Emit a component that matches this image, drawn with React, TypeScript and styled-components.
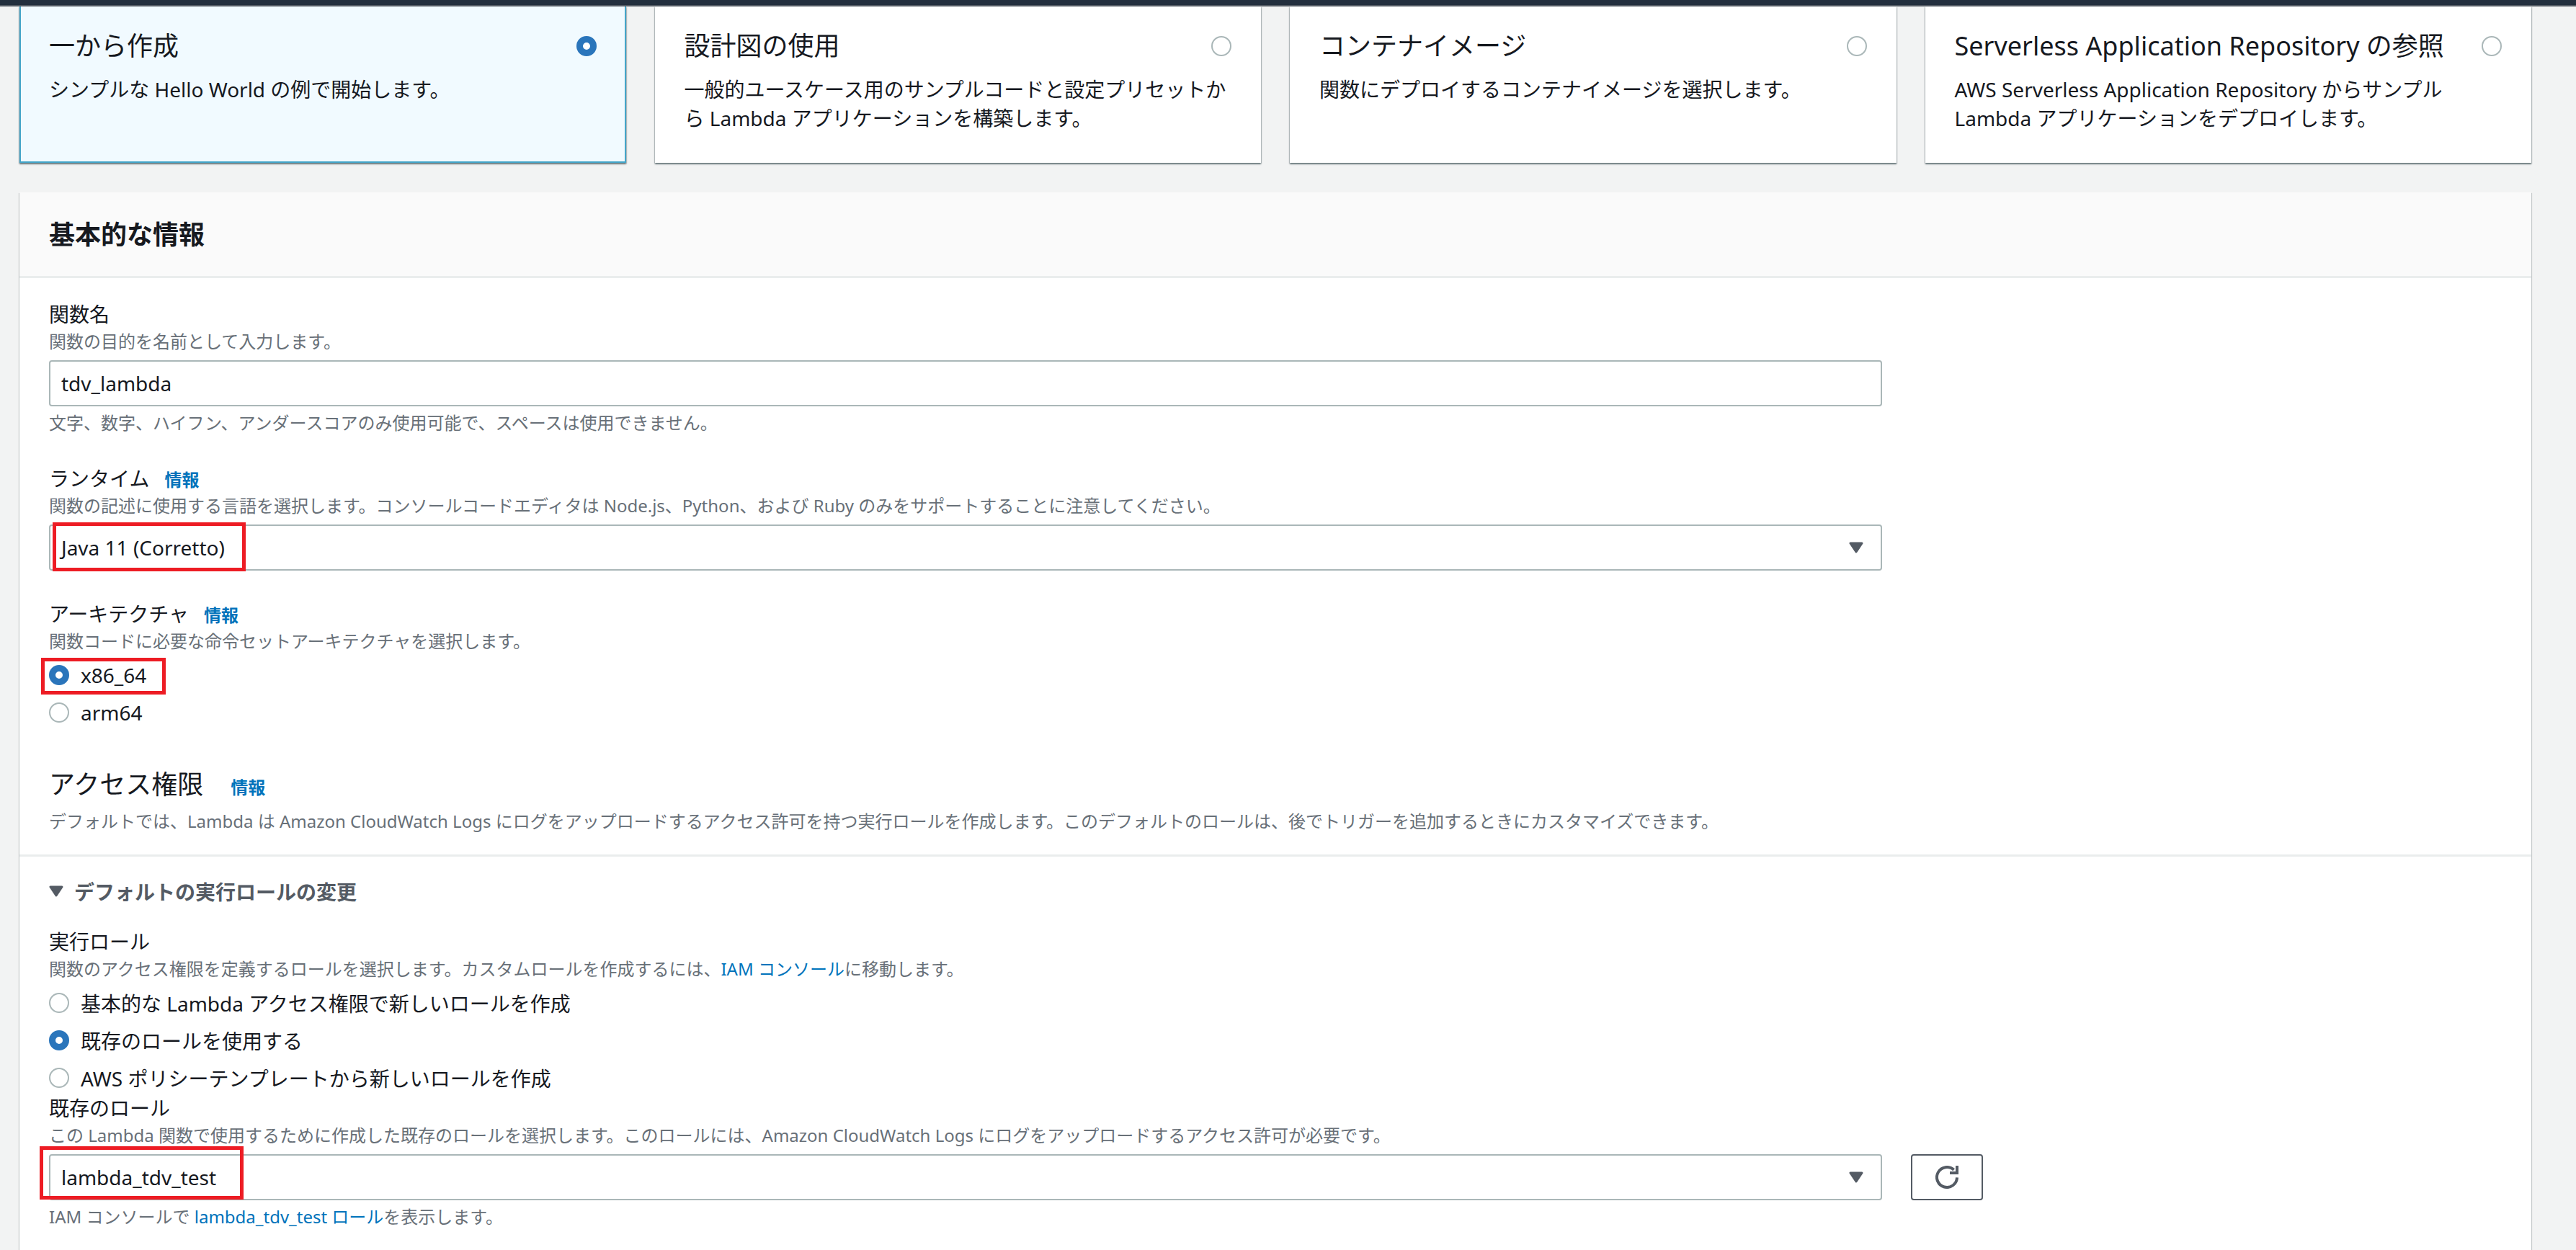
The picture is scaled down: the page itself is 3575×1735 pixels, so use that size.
import React, { FC } from 'react';
import styled, { createGlobalStyle } from 'styled-components';

const GlobalStyle = createGlobalStyle`
    html, body {
        margin: 0;
        padding: 0;
        background: #f2f3f3;
    }

    body {
        font-family: 'Noto Sans', 'Noto Sans CJK JP', sans-serif;
        color: #16191f;
    }
`;

const Page = styled.div`
    width: 3575px;
    height: 1735px;
    overflow: hidden;
    box-sizing: border-box;
    border-top: 7px solid #232f3e;
`;

const TopEdge = styled.div`
    height: 2px;
    background: #545b64;
`;

const Content = styled.div`
    padding: 0 62px 0 27px;
`;

const CardGrid = styled.div`
    display: grid;
    grid-template-columns: repeat(4, 1fr);
    gap: 40px;
`;

const Card = styled.div<{ $selected?: boolean }>`
    height: 217px;
    box-sizing: border-box;
    padding: ${({ $selected }) => ($selected ? '33px 39px 0' : '33px 41px 0')};
    background: ${({ $selected }) => ($selected ? '#f1faff' : '#fff')};
    border: ${({ $selected }) => ($selected ? '2px solid #44a5c9' : '0 solid transparent')};
    border-top: 0;
    box-shadow: 0 2px 2px rgba(0, 28, 36, 0.45), 1px 1px 1px rgba(0, 28, 36, 0.15), -1px 1px 1px rgba(0, 28, 36, 0.15);
`;

const CardHead = styled.div`
    display: flex;
    justify-content: space-between;
    align-items: center;
    height: 44px;
`;

const CardTitle = styled.div`
    font-size: 36px;
    line-height: 44px;
`;

const CardText = styled.div`
    margin-top: 18px;
    font-size: 28px;
    line-height: 40px;
`;

const RadioDot = styled.span<{ $checked?: boolean }>`
    flex: none;
    width: 28px;
    height: 28px;
    box-sizing: border-box;
    border-radius: 50%;
    background: #fff;
    border: ${({ $checked }) => ($checked ? '9px solid #2a75bb' : '2px solid #aab7b8')};
`;

const Panel = styled.div`
    margin-top: 41px;
    height: 1500px;
    background: #fff;
    box-shadow: 0 1px 1px rgba(0, 28, 36, 0.3), 1px 1px 1px rgba(0, 28, 36, 0.15), -1px 1px 1px rgba(0, 28, 36, 0.15);
`;

const PanelHeader = styled.div`
    display: flex;
    align-items: center;
    height: 112px;
    padding: 0 41px 4px;
    background: #fafafa;
    border-bottom: 3px solid #eaeded;
    font-size: 36px;
    font-weight: 700;
`;

const PanelBody = styled.div`
    padding: 28px 41px 0;
`;

const Label = styled.div<{ $top?: number }>`
    display: flex;
    align-items: baseline;
    gap: 21px;
    margin-top: ${({ $top }) => $top ?? 0}px;
    font-size: 28px;
    line-height: 44px;
`;

const InfoLink = styled.span`
    font-size: 24px;
    font-weight: 700;
    line-height: 1;
    color: #0073bb;
`;

const Hint = styled.div`
    font-size: 24px;
    line-height: 32px;
    color: #687078;
`;

const Helper = styled(Hint)`
    margin-top: 7px;
`;

const Link = styled.span`
    color: #0073bb;
`;

const ControlRow = styled.div`
    position: relative;
    display: flex;
    gap: 40px;
    margin-top: 10px;
    width: 2684px;
`;

const Control = styled.div`
    position: relative;
    display: flex;
    align-items: center;
    justify-content: space-between;
    flex: none;
    width: 2544px;
    height: 64px;
    box-sizing: border-box;
    padding: 0 24px 0 15px;
    background: #fff;
    border: 2px solid #aab7b8;
    border-radius: 4px;
    font-size: 28px;
`;

const RefreshButton = styled.div`
    display: flex;
    align-items: center;
    justify-content: center;
    width: 100px;
    height: 64px;
    box-sizing: border-box;
    border: 2px solid #545b64;
    border-radius: 4px;
    color: #545b64;
`;

const RadioGroup = styled.div`
    position: relative;
    display: flex;
    flex-direction: column;
    gap: 12px;
    margin-top: 11px;
`;

const RadioRow = styled.div`
    display: flex;
    align-items: center;
    gap: 16px;
    height: 40px;
    font-size: 28px;
`;

const Highlight = styled.div<{ $left: number; $top: number; $width: number; $height: number }>`
    position: absolute;
    left: ${({ $left }) => $left}px;
    top: ${({ $top }) => $top}px;
    width: ${({ $width }) => $width}px;
    height: ${({ $height }) => $height}px;
    box-sizing: border-box;
    border: 5px solid #ed1c24;
    pointer-events: none;
`;

const SectionTitle = styled.div`
    display: flex;
    align-items: baseline;
    gap: 38px;
    margin-top: 53px;
    font-size: 36px;
    line-height: 54px;
`;

const AccessHint = styled(Hint)`
    margin-top: 8px;
`;

const Divider = styled.div`
    height: 3px;
    margin: 30px -41px 0;
    background: #eaeded;
`;

const Expander = styled.div`
    display: flex;
    align-items: center;
    gap: 15px;
    margin-top: 26px;
    height: 44px;
    font-size: 28px;
    font-weight: 700;
    color: #545b64;
`;

const CaretIcon: FC = () => (
    <svg width="20" height="16" viewBox="0 0 20 16">
        <path d="M2 2h16l-8 12z" fill="#545b64" stroke="#545b64" strokeWidth="3" strokeLinejoin="round" />
    </svg>
);

const RefreshIcon: FC = () => (
    <svg width="32" height="32" viewBox="0 0 16 16" fill="none" stroke="currentColor" strokeWidth="2">
        <path d="M15 8.2a7 7 0 1 1-2.2-5.3" />
        <path d="M15 0v5h-5" />
    </svg>
);

const Radio: FC<{ checked?: boolean; children: React.ReactNode }> = ({ checked, children }) => (
    <RadioRow>
        <RadioDot $checked={checked} />
        <span>{children}</span>
    </RadioRow>
);

const App: FC = () => {
    return (
        <>
            <GlobalStyle />
            <Page>
                <TopEdge />
                <Content>
                    <CardGrid>
                        <Card $selected>
                            <CardHead>
                                <CardTitle>一から作成</CardTitle>
                                <RadioDot $checked />
                            </CardHead>
                            <CardText>シンプルな Hello World の例で開始します。</CardText>
                        </Card>
                        <Card>
                            <CardHead>
                                <CardTitle>設計図の使用</CardTitle>
                                <RadioDot />
                            </CardHead>
                            <CardText>
                                一般的ユースケース用のサンプルコードと設定プリセットか
                                <br />ら Lambda アプリケーションを構築します。
                            </CardText>
                        </Card>
                        <Card>
                            <CardHead>
                                <CardTitle>コンテナイメージ</CardTitle>
                                <RadioDot />
                            </CardHead>
                            <CardText>関数にデプロイするコンテナイメージを選択します。</CardText>
                        </Card>
                        <Card>
                            <CardHead>
                                <CardTitle>Serverless Application Repository の参照</CardTitle>
                                <RadioDot />
                            </CardHead>
                            <CardText>
                                AWS Serverless Application Repository からサンプル
                                <br />
                                Lambda アプリケーションをデプロイします。
                            </CardText>
                        </Card>
                    </CardGrid>

                    <Panel>
                        <PanelHeader>基本的な情報</PanelHeader>
                        <PanelBody>
                            <Label>関数名</Label>
                            <Hint>関数の目的を名前として入力します。</Hint>
                            <ControlRow>
                                <Control>tdv_lambda</Control>
                            </ControlRow>
                            <Helper>文字、数字、ハイフン、アンダースコアのみ使用可能で、スペースは使用できません。</Helper>

                            <Label $top={39}>
                                ランタイム <InfoLink>情報</InfoLink>
                            </Label>
                            <Hint>
                                関数の記述に使用する言語を選択します。コンソールコードエディタは Node.js、Python、および Ruby のみをサポートすることに注意してください。
                            </Hint>
                            <ControlRow>
                                <Control>
                                    Java 11 (Corretto)
                                    <CaretIcon />
                                </Control>
                                <Highlight $left={5} $top={-3} $width={268} $height={68} />
                            </ControlRow>

                            <Label $top={38}>
                                アーキテクチャ <InfoLink>情報</InfoLink>
                            </Label>
                            <Hint>関数コードに必要な命令セットアーキテクチャを選択します。</Hint>
                            <RadioGroup>
                                <Radio checked>x86_64</Radio>
                                <Radio>arm64</Radio>
                                <Highlight $left={-11} $top={-4} $width={173} $height={51} />
                            </RadioGroup>

                            <SectionTitle>
                                アクセス権限 <InfoLink>情報</InfoLink>
                            </SectionTitle>
                            <AccessHint>
                                デフォルトでは、Lambda は Amazon CloudWatch Logs にログをアップロードするアクセス許可を持つ実行ロールを作成します。このデフォルトのロールは、後でトリガーを追加するときにカスタマイズできます。
                            </AccessHint>
                            <Divider />

                            <Expander>
                                <CaretIcon />
                                デフォルトの実行ロールの変更
                            </Expander>

                            <Label $top={26}>実行ロール</Label>
                            <Hint>
                                関数のアクセス権限を定義するロールを選択します。カスタムロールを作成するには、<Link>IAM コンソール</Link>に移動します。
                            </Hint>
                            <RadioGroup>
                                <Radio>基本的な Lambda アクセス権限で新しいロールを作成</Radio>
                                <Radio checked>既存のロールを使用する</Radio>
                                <Radio>AWS ポリシーテンプレートから新しいロールを作成</Radio>
                            </RadioGroup>

                            <Label>既存のロール</Label>
                            <Hint>
                                この Lambda 関数で使用するために作成した既存のロールを選択します。このロールには、Amazon CloudWatch Logs にログをアップロードするアクセス許可が必要です。
                            </Hint>
                            <ControlRow>
                                <Control>
                                    lambda_tdv_test
                                    <CaretIcon />
                                </Control>
                                <RefreshButton>
                                    <RefreshIcon />
                                </RefreshButton>
                                <Highlight $left={-13} $top={-11} $width={283} $height={74} />
                            </ControlRow>
                            <Helper>
                                IAM コンソールで <Link>lambda_tdv_test ロール</Link>を表示します。
                            </Helper>
                        </PanelBody>
                    </Panel>
                </Content>
            </Page>
        </>
    );
};

export default App;
